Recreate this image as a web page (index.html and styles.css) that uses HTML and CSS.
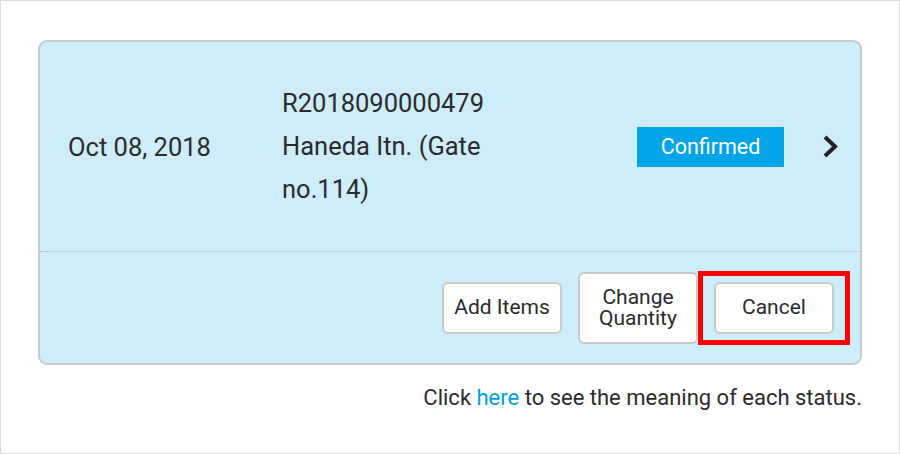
FILE: index.html
```html
<!DOCTYPE html>
<html lang="en">
<head>
<meta charset="utf-8">
<title>Order</title>
<link rel="stylesheet" href="styles.css">
</head>
<body>
<div class="page">
  <div class="card">
    <div class="card-top">
      <div class="date">Oct 08, 2018</div>
      <div class="info">R2018090000479<br>Haneda Itn. (Gate no.114)</div>
      <div class="spacer"></div>
      <div class="badge">Confirmed</div>
      <svg class="chev" width="15" height="23" viewBox="0 0 15 23"><polyline points="2,2 12,11.5 2,21" fill="none" stroke="#222" stroke-width="4"/></svg>
    </div>
    <div class="card-bottom">
      <button class="btn">Add Items</button>
      <button class="btn tall">Change<br>Quantity</button>
      <div class="highlight">
        <button class="btn">Cancel</button>
        <span class="redbox"></span>
      </div>
    </div>
  </div>
  <p class="note">Click <a href="#">here</a> to see the meaning of each status.</p>
</div>
</body>
</html>
```
FILE: styles.css
```css
html, body {
  margin: 0;
  padding: 0;
  background: #fff;
}
body {
  font-family: Roboto, "Liberation Sans", sans-serif;
  color: #2b2b2b;
}
.page {
  box-sizing: border-box;
  width: 900px;
  height: 454px;
  border: 1px solid #dcdcdc;
  padding: 39px 37px 0 37px;
}
.card {
  box-sizing: border-box;
  width: 824px;
  height: 325px;
  background: #cdedfb;
  border: 2px solid #c9c9c9;
  border-radius: 9px;
  display: flex;
  flex-direction: column;
}
.card-top {
  height: 209px;
  display: flex;
  align-items: center;
  padding: 0 22px 0 28px;
  border-bottom: 1px dotted #b5b5b5;
}
.date {
  flex: none;
  width: 214px;
  font-size: 25.5px;
}
.info {
  flex: none;
  width: 236px;
  font-size: 25.5px;
  line-height: 43px;
}
.spacer { flex: 1; }
.badge {
  flex: none;
  width: 147px;
  height: 40px;
  background: #00a4e7;
  color: #fff;
  font-size: 21.5px;
  display: flex;
  align-items: center;
  justify-content: center;
}
.chev {
  flex: none;
  margin-left: 39px;
  display: block;
}
.card-bottom {
  flex: 1;
  display: flex;
  justify-content: flex-end;
  align-items: center;
  gap: 16px;
  padding-right: 26px;
}
.btn {
  box-sizing: border-box;
  width: 120px;
  height: 52px;
  background: #fff;
  border: 2px solid #c9c9c9;
  border-radius: 6px;
  font-family: Roboto, "Liberation Sans", sans-serif;
  font-size: 21px;
  color: #2b2b2b;
  padding: 0;
  line-height: 1;
  display: block;
}
.btn.tall {
  height: 72px;
  line-height: 21px;
}
.highlight {
  position: relative;
}
.redbox {
  position: absolute;
  left: -16px;
  right: -16px;
  top: -11px;
  bottom: -11px;
  border: 5px solid #f00;
  pointer-events: none;
}
.note {
  margin: 20px 0 0;
  text-align: right;
  font-size: 22px;
  color: #2b2b2b;
}
.note a {
  color: #00a0e9;
  text-decoration: none;
}
```
